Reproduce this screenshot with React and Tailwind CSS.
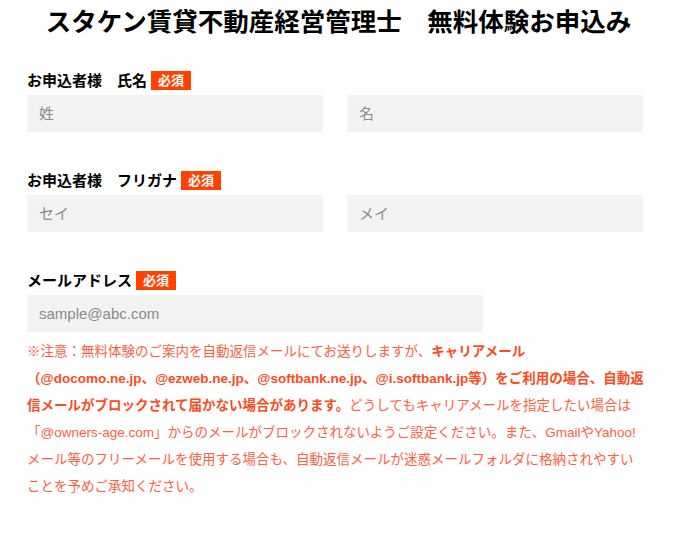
export default function App() {
  const font = { fontFamily: '"Liberation Sans", "Noto Sans CJK JP", sans-serif' };
  const Badge = () => (
    <span className="ml-[4px] inline-block bg-[#ff4200] px-[7px] text-[13px] font-bold leading-[19px] text-white">
      必須
    </span>
  );
  const inputCls =
    "h-[37px] w-full bg-[#f3f3f3] pl-[12px] text-[15px] text-[#333] outline-none placeholder:text-[#8a8a8a]";
  return (
    <div className="min-h-screen w-full bg-white text-black" style={font}>
      <div className="pl-[27px] pr-[26px] [text-spacing-trim:space-all]">
        <h1 className="ml-[3px] pt-[7px] text-center text-[25.5px] font-bold leading-[31px]">
          スタケン賃貸不動産経営管理士　無料体験お申込み
        </h1>

        <div className="mt-[33px] w-[616px]">
          <div className="flex h-[19px] items-center">
            <span className="text-[15px] font-bold leading-[19px]">お申込者様　氏名</span>
            <Badge />
          </div>
          <div className="mt-[5px] grid grid-cols-2 gap-6">
            <input className={inputCls} placeholder="姓" style={font} />
            <input className={inputCls} placeholder="名" style={font} />
          </div>
        </div>

        <div className="mt-[39px] w-[616px]">
          <div className="flex h-[19px] items-center">
            <span className="text-[15px] font-bold leading-[19px]">お申込者様　フリガナ</span>
            <Badge />
          </div>
          <div className="mt-[5px] grid grid-cols-2 gap-6">
            <input className={inputCls} placeholder="セイ" style={font} />
            <input className={inputCls} placeholder="メイ" style={font} />
          </div>
        </div>

        <div className="mt-[39px] w-[616px]">
          <div className="flex h-[19px] items-center">
            <span className="text-[15px] font-bold leading-[19px]">メールアドレス</span>
            <Badge />
          </div>
          <div className="mt-[5px] w-[456px]">
            <input className={inputCls} placeholder="sample@abc.com" style={font} />
          </div>
        </div>

        <p className="mt-[6px] w-[620px] text-[13.5px] leading-[27px] text-[#ff6040]">
          ※注意：無料体験のご案内を自動返信メールにてお送りしますが、
          <b className="font-bold text-[#ff4a1c]">
            キャリアメール（@docomo.ne.jp、@ezweb.ne.jp、@softbank.ne.jp、@i.softbank.jp等）をご利用の場合、自動返信メールがブロックされて届かない場合があります。
          </b>
          どうしてもキャリアメールを指定したい場合は「@owners-age.com」からのメールがブロックされないようご設定ください。また、GmailやYahoo!メール等のフリーメールを使用する場合も、自動返信メールが迷惑メールフォルダに格納されやすいことを予めご承知ください。
        </p>
      </div>
    </div>
  );
}
